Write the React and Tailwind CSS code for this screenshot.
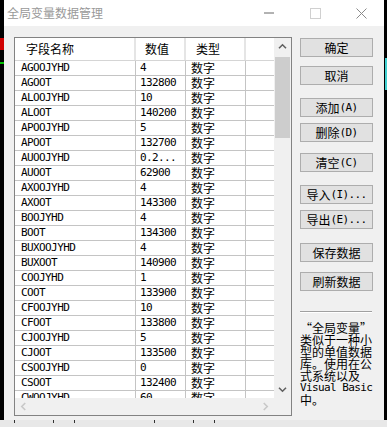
import React from "react";

const cjk = { fontFamily: '"Noto Sans CJK SC", "Noto Sans", sans-serif' };
const mono = { fontFamily: '"DejaVu Sans Mono", "Noto Sans CJK SC", monospace' };

const rows = [
  ["AGOOJYHD", "4"],
  ["AGOOT", "132800"],
  ["ALOOJYHD", "10"],
  ["ALOOT", "140200"],
  ["APOOJYHD", "5"],
  ["APOOT", "132700"],
  ["AUOOJYHD", "0.2..."],
  ["AUOOT", "62900"],
  ["AXOOJYHD", "4"],
  ["AXOOT", "143300"],
  ["BOOJYHD", "4"],
  ["BOOT", "134300"],
  ["BUXOOJYHD", "4"],
  ["BUXOOT", "140900"],
  ["COOJYHD", "1"],
  ["COOT", "133900"],
  ["CFOOJYHD", "10"],
  ["CFOOT", "133800"],
  ["CJOOJYHD", "5"],
  ["CJOOT", "133500"],
  ["CSOOJYHD", "0"],
  ["CSOOT", "132400"],
  ["CWOOJYHD", "60"],
];

function Btn({ label, extra, className = "" }) {
  return (
    <button
      className={`w-[73px] h-[19px] shrink-0 bg-[#e1e1e1] border border-[#adadad] flex items-center justify-center text-[12px] leading-[14px] text-black ${className}`}
      style={cjk}
    >
      {label}
      {extra && (
        <span className="text-[11px] tracking-[-0.6px]" style={mono}>
          {extra}
        </span>
      )}
    </button>
  );
}

function Chevron({ dir, color = "#606060" }) {
  const d = {
    up: "M1 6 L5 2 L9 6",
    down: "M1 2 L5 6 L9 2",
    left: "M6 1 L2 5 L6 9",
    right: "M2 1 L6 5 L2 9",
  }[dir];
  const vb = dir === "up" || dir === "down" ? "0 0 10 8" : "0 0 8 10";
  const w = dir === "up" || dir === "down" ? 9 : 7;
  const h = dir === "up" || dir === "down" ? 7 : 9;
  return (
    <svg width={w} height={h} viewBox={vb}>
      <path d={d} fill="none" stroke={color} strokeWidth="1.8" />
    </svg>
  );
}

export default function App() {
  return (
    <div className="w-[387px] h-[427px] overflow-hidden bg-black flex flex-col">
      <div className="flex h-[420px]">
        {/* left background strip */}
        <div className="w-[4px] flex flex-col bg-black">
          <div className="h-[38px]" />
          <div className="h-[12px] bg-[#d00000]" />
          <div className="h-[12px]" />
          <div className="h-[2px] bg-[#00c000]" />
        </div>

        {/* dialog */}
        <div className="w-[380px] flex flex-col bg-[#f0f0f0]">
          {/* title bar */}
          <div className="h-[26px] bg-white flex items-center">
            <div className="pl-[3px] text-[12px] leading-[14px] text-[#999999] flex-1 pb-[1px]" style={cjk}>
              全局变量数据管理
            </div>
            <div className="w-[46px] h-[26px] flex items-center justify-center">
              <svg width="10" height="2" viewBox="0 0 10 2">
                <path d="M0 1 H10" stroke="#666" strokeWidth="1" />
              </svg>
            </div>
            <div className="w-[46px] h-[26px] flex items-center justify-center">
              <svg width="11" height="11" viewBox="0 0 11 11">
                <rect x="0.5" y="0.5" width="10" height="10" fill="none" stroke="#d0d0d0" />
              </svg>
            </div>
            <div className="w-[46px] h-[26px] flex items-center justify-center">
              <svg width="11" height="11" viewBox="0 0 11 11">
                <path d="M0.5 0.5 L10.5 10.5 M10.5 0.5 L0.5 10.5" stroke="#8a8a8a" strokeWidth="1" />
              </svg>
            </div>
          </div>

          {/* body */}
          <div className="flex-1 flex pl-[10px] pt-[11px]">
            {/* list box */}
            <div className="w-[278px] h-[379px] border border-[#828282] bg-white flex flex-col">
              <div className="flex h-[360px]">
                <div className="w-[259px] flex flex-col overflow-hidden">
                  {/* header */}
                  <div className="h-[23px] shrink-0 flex border-b border-[#d5d5d5] bg-white text-[12px] leading-[14px] text-black" style={cjk}>
                    <div className="w-[121px] border-r-2 border-[#e5e5e5] pl-[11px] flex items-center">字段名称</div>
                    <div className="w-[50px] border-r-2 border-[#e5e5e5] pl-[9px] flex items-center">数值</div>
                    <div className="w-[60px] border-r-2 border-[#e5e5e5] pl-[10px] flex items-center">类型</div>
                    <div className="w-[28px]" />
                  </div>
                  {/* rows */}
                  <div className="h-[337px] overflow-hidden">
                    {rows.map(([name, val]) => (
                      <div key={name} className="h-[15px] flex border-b border-[#c4c4c4] text-black">
                        <div
                          className="w-[121px] border-r border-[#c4c4c4] pl-[6px] flex items-center text-[11px] leading-[14px] tracking-[-0.6px]"
                          style={mono}
                        >
                          {name}
                        </div>
                        <div
                          className="w-[50px] border-r border-[#c4c4c4] pl-[4px] flex items-center text-[11px] leading-[14px] tracking-[-0.6px]"
                          style={mono}
                        >
                          {val}
                        </div>
                        <div className="w-[60px] border-r border-[#c4c4c4] pl-[5px] flex items-center text-[12px] leading-[14px]" style={cjk}>
                          数字
                        </div>
                        <div className="w-[28px]" />
                      </div>
                    ))}
                  </div>
                </div>
                {/* vertical scrollbar */}
                <div className="w-[17px] bg-[#f0f0f0] flex flex-col">
                  <div className="h-[17px] flex items-center justify-center">
                    <Chevron dir="up" />
                  </div>
                  <div className="h-[2px]" />
                  <div className="h-[81px] mx-[1px] bg-[#cdcdcd]" />
                  <div className="flex-1" />
                  <div className="h-[17px] flex items-center justify-center">
                    <Chevron dir="down" />
                  </div>
                </div>
              </div>
              {/* horizontal scrollbar */}
              <div className="h-[17px] flex bg-[#f0f0f0]">
                <div className="w-[17px] flex items-center justify-center">
                  <Chevron dir="left" color="#c8c8c8" />
                </div>
                <div className="flex-1" />
                <div className="w-[17px] flex items-center justify-center">
                  <Chevron dir="right" color="#c8c8c8" />
                </div>
                <div className="w-[17px]" />
              </div>
            </div>

            {/* buttons column */}
            <div className="ml-[8px] flex flex-col pt-[1px]">
              <Btn label="确定" />
              <Btn label="取消" className="mt-[9px]" />
              <Btn label="添加" extra="(A)" className="mt-[13px]" />
              <Btn label="删除" extra="(D)" className="mt-[6px]" />
              <Btn label="清空" extra="(C)" className="mt-[11px]" />
              <Btn label="导入" extra="(I)..." className="mt-[13px]" />
              <Btn label="导出" extra="(E)..." className="mt-[6px]" />
              <Btn label="保存数据" className="mt-[14px]" />
              <Btn label="刷新数据" className="mt-[10px]" />
              <div className="mt-[20px] w-[72px] h-[2px] border-t border-[#a0a0a0] border-b border-b-white" />
              <div className="mt-[9px] text-[12px] leading-[12px] text-black" style={cjk}>
                <div>“全局变量”</div>
                <div>类似于一种小</div>
                <div>型的单值数据</div>
                <div>库。使用在公</div>
                <div>式系统以及</div>
                <div className="text-[11px] tracking-[-0.6px]" style={mono}>
                  Visual Basic
                </div>
                <div>中。</div>
              </div>
            </div>
          </div>
        </div>

        {/* right background strip */}
        <div className="w-[3px] flex flex-col bg-black">
          <div className="h-[58px]" />
          <div className="h-[32px] ml-[1px] bg-[#40d0d0]" />
        </div>
      </div>
      {/* bottom background strip */}
      <div className="h-[7px] bg-[#e8e8e8] flex items-start gap-[20px] pl-[14px] overflow-hidden">
        <div className="w-[40px] h-[3px] border-l border-r border-[#333]" />
        <div className="w-[60px] h-[3px] border-l border-[#333]" />
        <div className="w-[40px] h-[3px] border-l border-r border-[#333]" />
        <div className="w-[70px] h-[3px] border-l border-[#333]" />
      </div>
    </div>
  );
}
